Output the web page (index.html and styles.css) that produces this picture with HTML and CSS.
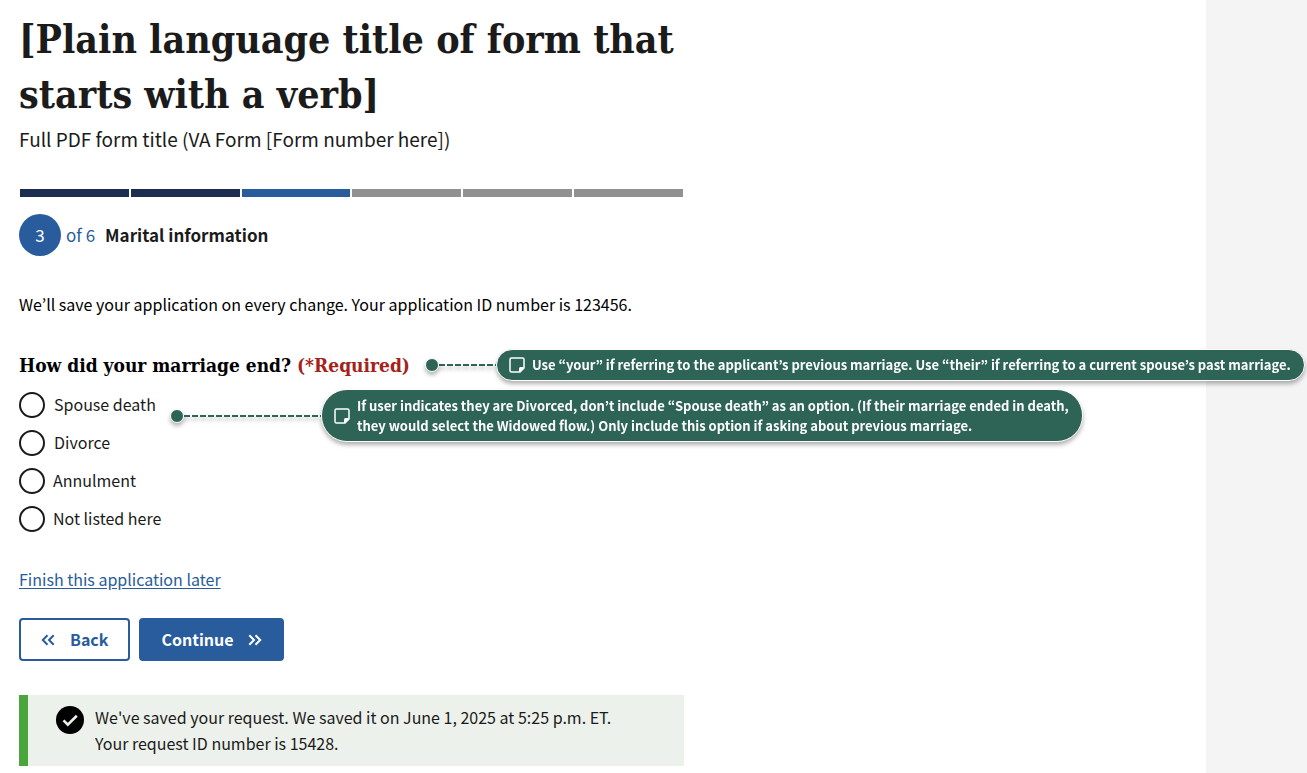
FILE: index.html
```html
<!DOCTYPE html>
<html lang="en">
<head>
<meta charset="utf-8">
<meta name="viewport" content="width=device-width, initial-scale=1">
<title>Marital information</title>
<link rel="stylesheet" href="styles.css">
</head>
<body>
<main class="page">
  <header class="intro">
    <h1 class="title">[Plain language title of form that starts with a verb]</h1>
    <p class="subtitle">Full PDF form title (VA Form [Form number here])</p>
  </header>

  <div class="progress">
    <span class="segment segment-done"></span>
    <span class="segment segment-done"></span>
    <span class="segment segment-current"></span>
    <span class="segment"></span>
    <span class="segment"></span>
    <span class="segment"></span>
  </div>
  <h2 class="step">
    <span class="step-number">3</span>
    <span class="step-total">of 6</span>
    <span class="step-name">Marital information</span>
  </h2>

  <p class="save-note">We’ll save your application on every change. Your application ID number is 123456.</p>

  <form class="form">
    <div class="question" role="radiogroup" aria-labelledby="question-title">
      <div class="question-head">
        <h3 class="question-title" id="question-title">How did your marriage end? <span class="required">(*Required)</span></h3>
        <div class="note note-title">
          <span class="note-dot"></span>
          <span class="note-line"></span>
          <div class="note-pill">
            <svg class="note-icon" viewBox="0 0 16 16" aria-hidden="true"><path d="M2.500 1h11a1.500 1.500 0 0 1 1.500 1.500V11l-4 4H2.500A1.500 1.500 0 0 1 1 13.500v-11A1.500 1.500 0 0 1 2.500 1z" fill="none" stroke="#fff" stroke-width="1.500"/><path d="M10 15v-3.500a1.500 1.500 0 0 1 1.500-1.500H15v1l-4 4z" fill="#fff"/></svg>
            <p class="note-text">Use “your” if referring to the applicant’s previous marriage. Use “their” if referring to a current spouse’s past marriage.</p>
          </div>
        </div>
      </div>
      <div class="option">
        <input class="radio" type="radio" name="end" id="end-death"><label class="label label-wide" for="end-death">Spouse death</label>
        <div class="note note-option">
          <span class="note-dot"></span>
          <span class="note-line note-line-long"></span>
          <div class="note-pill note-pill-tall">
            <svg class="note-icon" viewBox="0 0 16 16" aria-hidden="true"><path d="M2.500 1h11a1.500 1.500 0 0 1 1.500 1.500V11l-4 4H2.500A1.500 1.500 0 0 1 1 13.500v-11A1.500 1.500 0 0 1 2.500 1z" fill="none" stroke="#fff" stroke-width="1.500"/><path d="M10 15v-3.500a1.500 1.500 0 0 1 1.500-1.500H15v1l-4 4z" fill="#fff"/></svg>
            <p class="note-text">If user indicates they are Divorced, don’t include “Spouse death” as an option. (If their marriage ended in death,<br>they would select the Widowed flow.) Only include this option if asking about previous marriage.</p>
          </div>
        </div>
      </div>
      <div class="option"><input class="radio" type="radio" name="end" id="end-divorce"><label class="label label-wide" for="end-divorce">Divorce</label></div>
      <div class="option"><input class="radio" type="radio" name="end" id="end-annulment"><label class="label" for="end-annulment">Annulment</label></div>
      <div class="option"><input class="radio" type="radio" name="end" id="end-other"><label class="label" for="end-other">Not listed here</label></div>
    </div>

    <a class="later" href="#">Finish this application later</a>

    <div class="actions">
      <button class="button button-back" type="button">
        <svg class="chevrons" viewBox="0 0 14 12" aria-hidden="true"><path d="M6.500 1.200 1.800 6l4.700 4.800M12.700 1.200 8 6l4.700 4.800"/></svg>
        <span class="button-text">Back</span>
      </button>
      <button class="button button-next" type="submit">
        <span class="button-text">Continue</span>
        <svg class="chevrons" viewBox="0 0 14 12" aria-hidden="true"><path d="M1.300 1.200 6 6l-4.700 4.800M7.500 1.200 12.200 6l-4.700 4.800"/></svg>
      </button>
    </div>
  </form>

  <div class="alert" role="status">
    <svg class="alert-icon" viewBox="0 0 28 28" aria-hidden="true"><circle cx="14" cy="14" r="14"/><path d="M7.500 14.300l4.300 4.300 9-8.800" fill="none" stroke="#edf1eb" stroke-width="2.600"/></svg>
    <p class="alert-text">We've saved your request. We saved it on June 1, 2025 at 5:25 p.m. ET.<br>Your request ID number is 15428.</p>
  </div>
</main>
</body>
</html>
```

FILE: styles.css
```css
* {
  box-sizing: border-box;
}

body {
  margin: 0;
  background: #f4f4f4;
  color: #1b1b1b;
  font-family: "Noto Sans CJK KR", "Noto Sans", sans-serif;
  font-size: 16px;
  line-height: 26px;
}

h1, h2, h3, p {
  margin: 0;
}

.page {
  margin-right: 101px;
  padding: 12px 19px 7px;
  background: #fff;
}

.intro, .progress, .alert {
  max-width: 665px;
}

.title {
  font: bold 39px/55px "DejaVu Serif Condensed", "DejaVu Serif", serif;
}

.subtitle {
  margin-top: 3px;
  font-size: 19px;
  line-height: 28px;
}

.progress {
  display: flex;
  gap: 2px;
  margin-top: 36px;
  padding: 0 1px;
}

.segment {
  flex: 1;
  height: 8px;
  background: #919191;
}

.segment-done {
  background: #1c2d4f;
}

.segment-current {
  background: #285c9c;
}

.step {
  display: flex;
  align-items: center;
  gap: 5px;
  margin-top: 17px;
  font-size: 17px;
}

.step-number {
  width: 42px;
  height: 42px;
  border-radius: 50%;
  background: #285c9c;
  color: #fff;
  font-weight: 400;
  line-height: 42px;
  text-align: center;
}

.step-total {
  margin-right: 5px;
  color: #285c9c;
  font-weight: 400;
}

.save-note {
  margin-top: 35px;
  color: #000;
}

.question-head {
  display: flex;
  align-items: center;
  height: 32px;
  margin-top: 32px;
  margin-bottom: 5px;
}

.question-title {
  color: #000;
  font: bold 19px/32px "DejaVu Serif Condensed", "DejaVu Serif", serif;
  white-space: nowrap;
}

.required {
  color: #a5221b;
}

.note {
  display: flex;
  align-items: center;
  filter: drop-shadow(0 3px 2px rgba(0, 0, 0, 0.3));
}

.note-title {
  margin-right: -101px;
  margin-left: 15px;
}

.note-option {
  position: absolute;
  top: 3px;
  left: 151px;
}

.note-dot {
  width: 14px;
  height: 14px;
  border: 1px solid #fff;
  border-radius: 50%;
  background: #2d6456;
}

.note-line {
  width: 57px;
  height: 2px;
  background: repeating-linear-gradient(90deg, #2d6456 0 6px, transparent 6px 8px);
}

.note-line-long {
  width: 137px;
}

.note-pill {
  display: flex;
  align-items: center;
  gap: 7px;
  height: 32px;
  padding: 0 13px 0 12px;
  border: 1px solid #fff;
  border-radius: 26px;
  background: #2d6456;
}

.note-pill-tall {
  height: 53px;
}

.note-icon {
  flex: none;
  width: 16px;
  height: 16px;
}

.note-text {
  color: #fff;
  font-size: 13px;
  font-weight: 700;
  line-height: 20px;
  white-space: nowrap;
}

.option {
  position: relative;
  display: flex;
  align-items: center;
  height: 38px;
}

.radio {
  appearance: none;
  width: 26px;
  height: 26px;
  margin: 0;
  border: 2px solid #1b1b1b;
  border-radius: 50%;
  background: #fff;
}

.radio:checked {
  background: #285c9c;
  box-shadow: inset 0 0 0 4px #fff;
}

.label {
  padding-bottom: 2px;
  padding-left: 8px;
}

.label-wide {
  padding-left: 9px;
}

.later {
  display: inline-block;
  margin-top: 28px;
  color: #285c9c;
  text-underline-offset: 2px;
}

.actions {
  display: flex;
  gap: 9px;
  margin-top: 26px;
}

.button {
  display: flex;
  align-items: center;
  gap: 15px;
  height: 43px;
  padding: 0 20px;
  border: 2px solid #285c9c;
  border-radius: 4px;
  background: #fff;
  color: #285c9c;
  font: bold 16px/26px "Noto Sans CJK KR", "Noto Sans", sans-serif;
}

.button-text {
  padding-bottom: 2px;
}

.button-next {
  gap: 14px;
  background: #285c9c;
  color: #fff;
}

.chevrons {
  width: 14px;
  height: 12px;
  fill: none;
  stroke: currentColor;
  stroke-width: 2;
}

.alert {
  display: flex;
  gap: 11px;
  margin-top: 34px;
  padding: 9px 20px 10px 28px;
  border-left: 9px solid #4aa63a;
  background: #edf1eb;
}

.alert-icon {
  flex: none;
  width: 28px;
  height: 28px;
  margin-top: 2px;
}
```
